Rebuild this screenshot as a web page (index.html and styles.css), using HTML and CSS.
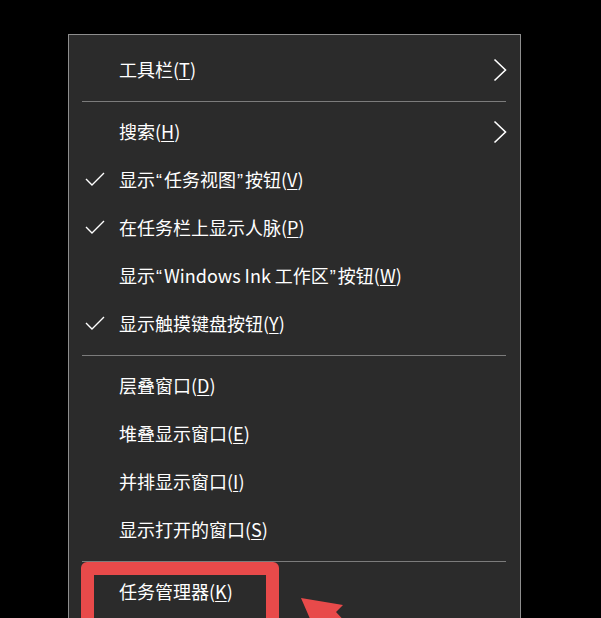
FILE: index.html
```html
<!DOCTYPE html>
<html lang="zh-CN">

<head>
    <meta charset="UTF-8">
    <meta name="viewport" content="width=device-width, initial-scale=1.0">
    <title>任务栏菜单</title>
    <link rel="stylesheet" href="styles.css">
</head>

<body>
    <div class="menu">
        <div class="item">
            <span class="check"></span>
            <span class="label">工具栏(<u>T</u>)</span>
            <svg class="arrow" width="14" height="24" viewBox="0 0 14 24"><path d="M1.5 1.5 L12.5 12 L1.5 22.5" fill="none" stroke="#fff" stroke-width="1.6"/></svg>
        </div>

        <div class="sep"></div>

        <div class="item">
            <span class="check"></span>
            <span class="label">搜索(<u>H</u>)</span>
            <svg class="arrow" width="14" height="24" viewBox="0 0 14 24"><path d="M1.5 1.5 L12.5 12 L1.5 22.5" fill="none" stroke="#fff" stroke-width="1.6"/></svg>
        </div>
        <div class="item">
            <span class="check"><svg width="20" height="14" viewBox="0 0 20 14"><path d="M1 7 L7 13 L19 1" fill="none" stroke="#fff" stroke-width="1.4"/></svg></span>
            <span class="label">显示<span class="q">“</span>任务视图<span class="q">”</span>按钮(<u>V</u>)</span>
        </div>
        <div class="item">
            <span class="check"><svg width="20" height="14" viewBox="0 0 20 14"><path d="M1 7 L7 13 L19 1" fill="none" stroke="#fff" stroke-width="1.4"/></svg></span>
            <span class="label">在任务栏上显示人脉(<u>P</u>)</span>
        </div>
        <div class="item">
            <span class="check"></span>
            <span class="label">显示<span class="q">“</span>Windows Ink 工作区<span class="q">”</span>按钮(<u>W</u>)</span>
        </div>
        <div class="item">
            <span class="check"><svg width="20" height="14" viewBox="0 0 20 14"><path d="M1 7 L7 13 L19 1" fill="none" stroke="#fff" stroke-width="1.4"/></svg></span>
            <span class="label">显示触摸键盘按钮(<u>Y</u>)</span>
        </div>

        <div class="sep"></div>

        <div class="item">
            <span class="check"></span>
            <span class="label">层叠窗口(<u>D</u>)</span>
        </div>
        <div class="item">
            <span class="check"></span>
            <span class="label">堆叠显示窗口(<u>E</u>)</span>
        </div>
        <div class="item">
            <span class="check"></span>
            <span class="label">并排显示窗口(<u>I</u>)</span>
        </div>
        <div class="item">
            <span class="check"></span>
            <span class="label">显示打开的窗口(<u>S</u>)</span>
        </div>

        <div class="sep"></div>

        <div class="item">
            <span class="check"></span>
            <span class="label">任务管理器(<u>K</u>)</span>
        </div>

        <!-- 红框标注 -->
        <div class="highlight"></div>
        <svg class="pointer" width="60" height="30" viewBox="0 0 60 30">
            <path d="M0 0 L42 7 L35 14 L50 30 L13 30 Z" fill="#e84a4a"/>
        </svg>
    </div>
</body>

</html>
```

FILE: styles.css
```css
body {
    margin: 0;
    padding: 0;
    background-color: #000;
    font-family: "Noto Sans CJK SC", "Noto Sans", sans-serif;
    overflow: hidden;
    height: 618px;
}

.menu {
    position: relative;
    margin: 34px 0 0 68px;
    width: 453px;
    height: 584px;
    padding-top: 12px;
    background-color: #2b2b2b;
    border: 1px solid #8e8e8e;
    border-bottom: none;
    box-sizing: border-box;
    overflow: hidden;
}

.item {
    display: flex;
    align-items: center;
    height: 48px;
    padding-bottom: 4px;
    box-sizing: border-box;
    color: #fff;
    font-size: 18px;
}

.check {
    width: 50px;
    padding-left: 16px;
    box-sizing: border-box;
    display: flex;
    align-items: center;
}

.label {
    flex: 1;
    white-space: nowrap;
}

.label .q {
    font-family: "Liberation Sans", sans-serif;
    padding: 0 2px 0 1px;
}

.label u {
    text-underline-offset: 2px;
    text-decoration-thickness: 1px;
}

.arrow {
    margin-right: 13px;
    margin-top: 2px;
}

.sep {
    height: 1px;
    margin: 6px 14px 7px 13px;
    background-color: #7c7c7c;
}

.highlight {
    position: absolute;
    left: 12px;
    top: 527px;
    width: 198px;
    height: 80px;
    border: 13px solid #e84a4a;
    border-radius: 6px;
    box-sizing: border-box;
}

.pointer {
    position: absolute;
    left: 232px;
    top: 563px;
}
```
